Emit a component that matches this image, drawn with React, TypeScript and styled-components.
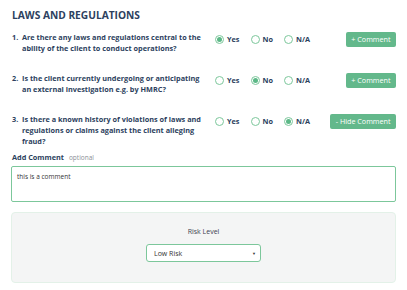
import styled, { createGlobalStyle } from 'styled-components';

const GlobalStyle = createGlobalStyle`
  body {
    margin: 0;
    background: #ffffff;
    font-family: 'Open Sans', 'Liberation Sans', sans-serif;
    color: #2d3f5e;
  }
`;

const Page = styled.main`
  padding: 8px 11px 0 11px;
  width: 385px;
`;

const Title = styled.h2`
  margin: 0 0 10px 1px;
  font-size: 10.2px;
  line-height: 14px;
  font-weight: 700;
  color: #2d3f5e;
`;

const QuestionRow = styled.div<{ last?: boolean }>`
  display: grid;
  grid-template-columns: 203px 1fr auto;
  align-items: start;
  margin-bottom: ${(p) => (p.last ? '5px' : '19px')};
`;

const QuestionText = styled.div`
  display: flex;
  padding: 0 8px 0 1px;
  font-size: 7.3px;
  font-weight: 700;
  line-height: 11px;
  color: #2d3f5e;

  span:first-child {
    width: 10px;
    flex-shrink: 0;
  }
`;

const Options = styled.div`
  display: flex;
  align-items: center;
  gap: 11px;
  padding-left: 1px;
  padding-top: 2px;
`;

const Option = styled.label`
  display: flex;
  align-items: center;
  gap: 3px;
  font-size: 7.3px;
  font-weight: 700;
  line-height: 10px;
  color: #2d3f5e;
`;

const Radio = styled.span<{ checked?: boolean }>`
  box-sizing: border-box;
  width: 9px;
  height: 9px;
  border-radius: 50%;
  border: 1px solid #7cc79b;
  display: flex;
  align-items: center;
  justify-content: center;

  &::after {
    content: '';
    width: 5px;
    height: 5px;
    border-radius: 50%;
    background: ${(p) => (p.checked ? '#5cb887' : 'transparent')};
  }
`;

const CommentButton = styled.button`
  height: 15px;
  padding: 0 5.5px;
  border: none;
  border-radius: 2px;
  background: #63b88b;
  color: #ffffff;
  font-family: 'Open Sans', 'Liberation Sans', sans-serif;
  font-size: 7.2px;
  line-height: 15px;
  white-space: nowrap;
`;

const CommentLabel = styled.div`
  margin: 0 0 3px 1px;
  font-size: 7.3px;
  line-height: 11px;
  font-weight: 700;
  color: #2d3f5e;

  small {
    margin-left: 5px;
    font-size: 6.5px;
    font-weight: 400;
    color: #8a8f96;
  }
`;

const CommentBox = styled.textarea`
  display: block;
  box-sizing: border-box;
  width: 385px;
  height: 36px;
  margin: 0;
  padding: 5px 5px;
  border: 1px solid #7cc79b;
  border-radius: 2px;
  resize: none;
  font-family: 'Open Sans', 'Liberation Sans', sans-serif;
  font-size: 6.5px;
  color: #333;
  outline: none;
`;

const RiskPanel = styled.section`
  box-sizing: border-box;
  margin-top: 10px;
  width: 385px;
  height: 71px;
  border: 1px solid #e3f1e8;
  border-radius: 4px;
  background: #f4f5f5;
  display: flex;
  flex-direction: column;
  align-items: center;
  padding-top: 14px;
`;

const RiskLabel = styled.div`
  font-size: 7px;
  line-height: 10px;
  color: #3b4350;
  margin-bottom: 7px;
`;

const Select = styled.div`
  box-sizing: border-box;
  width: 115px;
  height: 18px;
  border: 1px solid #7cc79b;
  border-radius: 3px;
  background: #fff;
  display: flex;
  align-items: center;
  justify-content: space-between;
  padding: 0 4px 0 7px;
  font-size: 7px;
  color: #333;

  span:last-child {
    font-size: 4px;
  }
`;

const questions = [
  {
    n: '1.',
    text: 'Are there any laws and regulations central to the ability of the client to conduct operations?',
    value: 'Yes',
    button: '+ Comment',
  },
  {
    n: '2.',
    text: 'Is the client currently undergoing or anticipating an external investigation e.g. by HMRC?',
    value: 'No',
    button: '+ Comment',
  },
  {
    n: '3.',
    text: 'Is there a known history of violations of laws and regulations or claims against the client alleging fraud?',
    value: 'N/A',
    button: '- Hide Comment',
  },
];

const App = () => (
  <>
    <GlobalStyle />
    <Page>
      <Title>LAWS AND REGULATIONS</Title>
      {questions.map((q, i) => (
        <QuestionRow key={q.n} last={i === questions.length - 1}>
          <QuestionText>
            <span>{q.n}</span>
            <span>{q.text}</span>
          </QuestionText>
          <Options>
            {['Yes', 'No', 'N/A'].map((o) => (
              <Option key={o}>
                <Radio checked={q.value === o} />
                {o}
              </Option>
            ))}
          </Options>
          <CommentButton>{q.button}</CommentButton>
        </QuestionRow>
      ))}
      <CommentLabel>
        Add Comment
        <small>optional</small>
      </CommentLabel>
      <CommentBox defaultValue="this is a comment" />
      <RiskPanel>
        <RiskLabel>Risk Level</RiskLabel>
        <Select>
          <span>Low Risk</span>
          <span>▼</span>
        </Select>
      </RiskPanel>
    </Page>
  </>
);

export default App;
